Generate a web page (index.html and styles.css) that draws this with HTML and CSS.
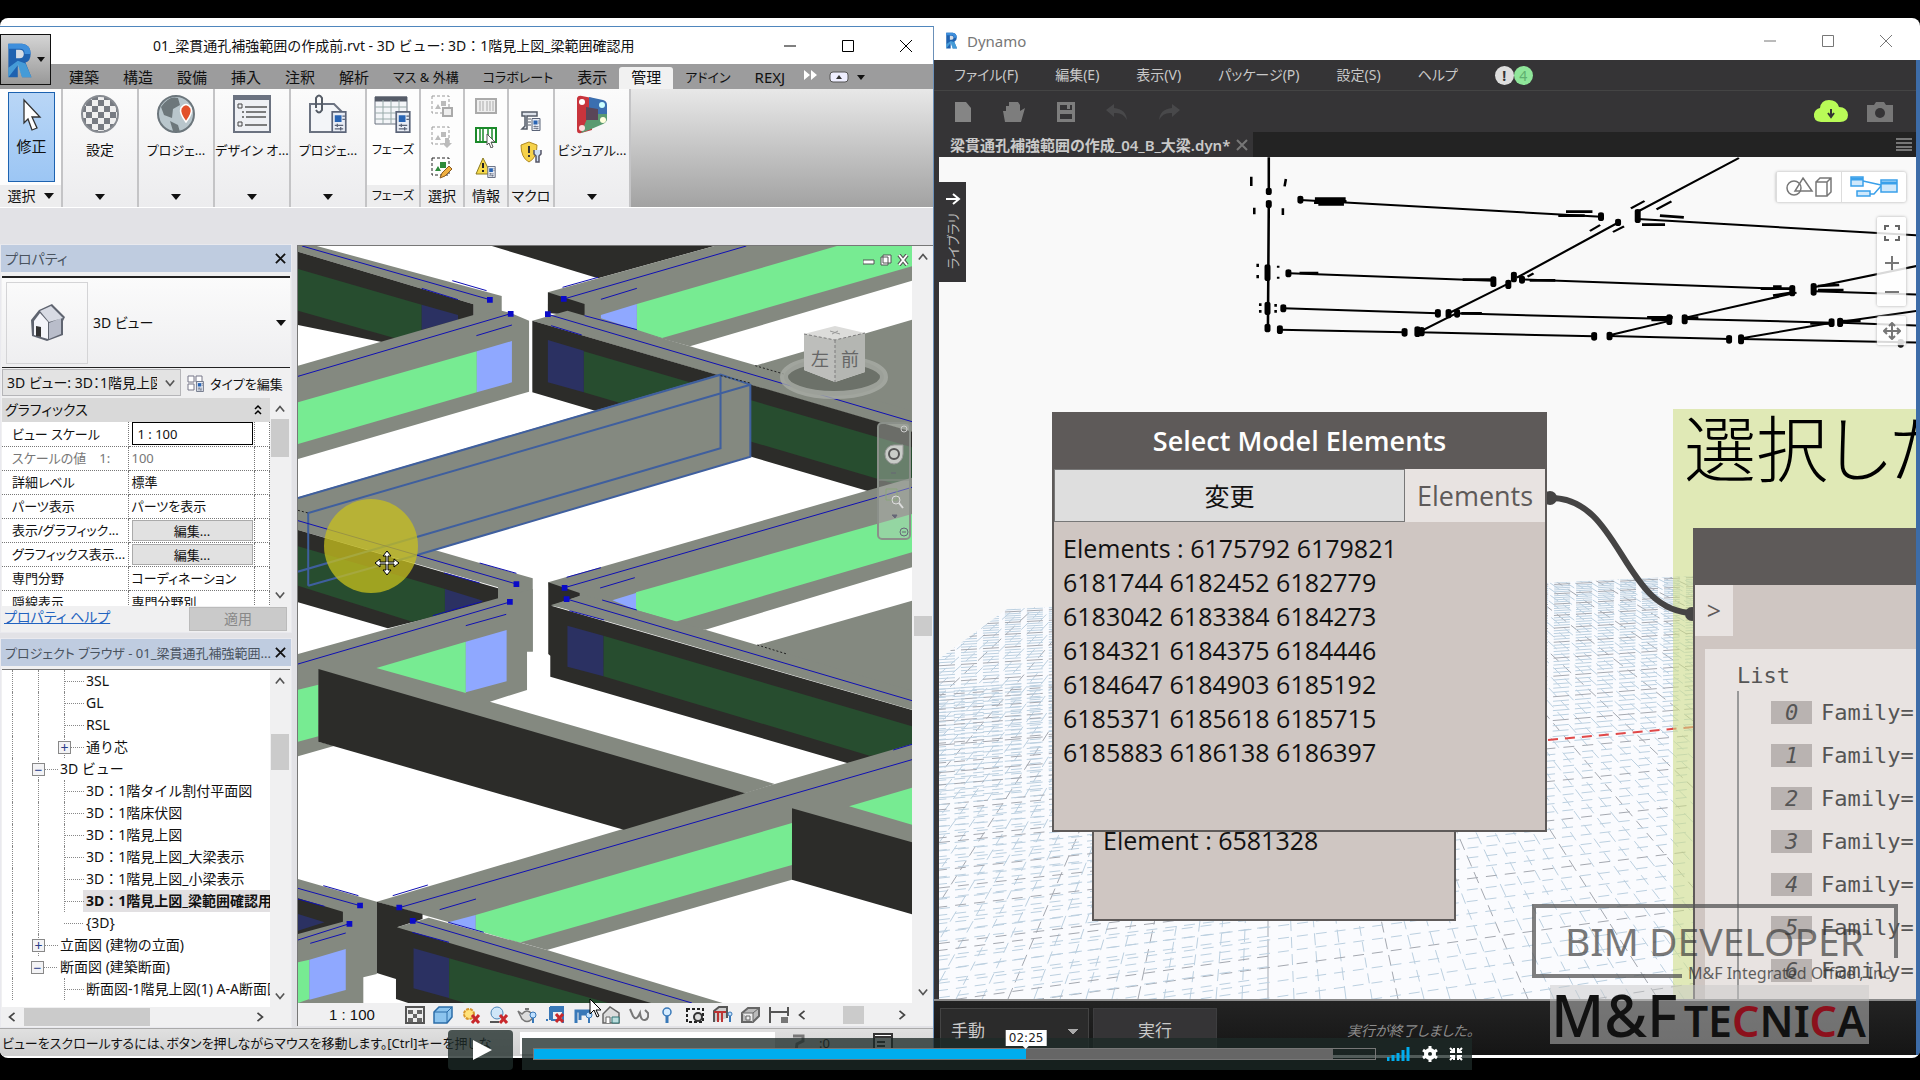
FILE: index.html
```
<!DOCTYPE html>
<html lang="ja">
<head>
  <meta charset="UTF-8">
  <title>梁貫通孔補強範囲の作成</title>
  <meta name="viewport" content="width=device-width, initial-scale=1">
  <link rel="stylesheet" href="styles.css">
</head>
<body>
  <svg class="defs" width="0" height="0">
    <symbol id="up" viewBox="0 0 12 12"><path d="M1 9l5-6 5 6" fill="none" stroke="#555" stroke-width="2"/></symbol>
    <symbol id="down" viewBox="0 0 12 12"><path d="M1 3l5 6 5-6" fill="none" stroke="#555" stroke-width="2"/></symbol>
    <symbol id="left" viewBox="0 0 12 12"><path d="M9 1L3 6l6 5" fill="none" stroke="#444" stroke-width="2"/></symbol>
    <symbol id="right" viewBox="0 0 12 12"><path d="M3 1l6 5-6 5" fill="none" stroke="#444" stroke-width="2"/></symbol>
    <symbol id="caret" viewBox="0 0 10 6"><path d="M0 0h10L5 6z" fill="currentColor"/></symbol>
    <symbol id="cross" viewBox="0 0 12 12"><path d="M1 1l10 10M11 1L1 11" fill="none" stroke="currentColor" stroke-width="2"/></symbol>
    <symbol id="doc" viewBox="0 0 18 26"><path d="M1 1h16v24H1z" fill="#e9edf5" stroke="#5b6478" stroke-width="2"/><path d="M4 5h8v8H4z" fill="#2864b4"/><path d="M13 6h3M13 10h3M4 17h10M4 21h10M7 15v4M11 19v4" stroke="#5b6478" stroke-width="1.5"/></symbol>
    <symbol id="rlogo" viewBox="0 0 30 42"><path d="M2 2h16q10 1 10 12 0 8-6 10l7 17H18L13 25V41H2z" fill="#1f62b0"/><path d="M2 2h16q10 1 10 12h-7q0-6-5-6H2z" fill="#3f8fdc"/><path d="M11 9h4q5 0 5 5t-5 5h-4z" fill="#d6dce4"/><path d="M2 30l11-8 9 3 7 16H18L13 27 2 41z" fill="#56b4e8" opacity=".7"/></symbol>
  </svg>

  <main class="desktop">
    <!-- Revit -->
    <section class="revit">
      <header class="title">
        <button class="app-btn" aria-label="アプリケーション メニュー"><svg width="27" height="36"><use href="#rlogo"/></svg><svg width="8" height="5"><use href="#caret"/></svg></button>
        <h1>01_梁貫通孔補強範囲の作成前.rvt - 3D ビュー: 3D：1階見上図_梁範囲確認用</h1>
        <div class="win-btns">
          <button aria-label="最小化"><svg width="14" height="14"><path d="M1 7h12" stroke="#000"/></svg></button>
          <button aria-label="最大化"><svg width="14" height="14"><path d="M1.500 1.500h11v11h-11z" fill="none" stroke="#000"/></svg></button>
          <button aria-label="閉じる"><svg width="14" height="14"><path d="M1 1l12 12M13 1L1 13" stroke="#000"/></svg></button>
        </div>
      </header>
      <nav class="tabs">
        <a href="#">建築</a><a href="#">構造</a><a href="#">設備</a><a href="#">挿入</a><a href="#">注釈</a><a href="#">解析</a><a href="#" class="kana">マス &amp; 外構</a><a href="#" class="kana">コラボレート</a><a href="#">表示</a><a href="#" class="active">管理</a><a href="#" class="kana">アドイン</a><a href="#">REXJ</a>
        <svg class="more" width="14" height="10"><path d="M1 0l6 5-6 5zM8 0l6 5-6 5z" fill="#fff"/></svg>
        <svg class="fold" width="20" height="12"><rect x="1" y="1" width="18" height="10" rx="3" fill="#eef" stroke="#555"/><path d="M7 8l3-4 3 4z" fill="#333"/></svg>
        <svg width="8" height="5"><use href="#caret"/></svg>
      </nav>
      <div class="ribbon">
        <div class="panel first">
          <button class="modify"><svg width="20" height="34" viewBox="0 0 20 34"><path d="M2 2l16 17h-8l5 11-5 2-4-11-4 4z" fill="#fff" stroke="#333" stroke-width="1.300"/></svg>修正</button>
          <footer>選択 <svg width="10" height="6"><use href="#caret"/></svg></footer>
        </div>
        <button class="drop"><svg width="40" height="40" viewBox="0 0 40 40"><defs><pattern id="chk" width="12" height="12" patternUnits="userSpaceOnUse"><path d="M0 0h6v6H0zM6 6h6v6H6z" fill="#777b82"/></pattern></defs><circle cx="20" cy="20" r="18" fill="#f0f0f0"/><circle cx="20" cy="20" r="18" fill="url(#chk)" stroke="#888c92" stroke-width="2"/></svg><span>設定</span><svg class="car" width="10" height="6"><use href="#caret"/></svg></button>
        <button class="drop"><svg width="40" height="40" viewBox="0 0 40 40"><circle cx="20" cy="20" r="18" fill="#b9c6cc" stroke="#6c767c" stroke-width="2"/><path d="M5 13q8-12 17-9l2 7-7 4-1 9-8-3zM14 27l8 4 2 7-7-1z" fill="#6d777b"/><path d="M30 28q-7-9-5-14 5-7 10 0 2 5-5 14z" fill="#e2502a" stroke="#fff" stroke-width="1.500"/></svg><span>プロジェ...</span><svg class="car" width="10" height="6"><use href="#caret"/></svg></button>
        <button class="drop"><svg width="40" height="40" viewBox="0 0 40 40"><path d="M2 2h36v36H2z" fill="#eef0f4" stroke="#6b7280" stroke-width="2"/><path d="M3 4h34" stroke="#6b7280" stroke-width="4"/><path d="M6 10h4v4H6zM6 28h4v4H6z" fill="none" stroke="#444"/><path d="M13 13h22M14 18h20M14 23h20M13 31h22M10 18h2M10 23h2" stroke="#555" stroke-width="1.500"/></svg><span>デザイン オ...</span><svg class="car" width="10" height="6"><use href="#caret"/></svg></button>
        <button class="drop"><svg width="40" height="40" viewBox="0 0 40 40"><path d="M2 10h24l8 8v20H2z" fill="#f3f5f8" stroke="#6b7280" stroke-width="2"/><path d="M8 14V4q3-5 6 0v12q-3 5-6 0" fill="none" stroke="#555c66" stroke-width="2"/><use href="#doc" x="23" y="17" width="16" height="22"/></svg><span>プロジェ...</span><svg class="car" width="10" height="6"><use href="#caret"/></svg></button>
        <div class="panel w52">
          <button class="big"><svg width="40" height="40" viewBox="0 0 40 40"><path d="M2 3h32v27H2z" fill="#f3f5f8" stroke="#6b7280"/><path d="M2 5h32" stroke="#565c68" stroke-width="5"/><path d="M2 13h32M2 19h32M2 25h32M10 6v24M18 6v24M26 6v24" stroke="#9aa"/><use href="#doc" x="22" y="17" width="16" height="22"/></svg><span>フェーズ</span></button>
          <footer>フェーズ</footer>
        </div>
        <div class="panel">
          <div class="icons">
            <svg width="22" height="22" viewBox="0 0 22 22"><path d="M1 1h17v17H1z" fill="none" stroke="#999" stroke-dasharray="3 2"/><path d="M4 14l3-5 3 5zM10 6h5v5h-5z" fill="#bbb"/><path d="M12 13h9v8h-9z" fill="#eee" stroke="#aaa" stroke-width="2"/></svg>
            <svg width="22" height="22" viewBox="0 0 22 22"><path d="M1 1h17v17H1z" fill="none" stroke="#999" stroke-dasharray="3 2"/><path d="M4 14l3-5 3 5zM10 6h5v5h-5z" fill="#bbb"/><path d="M14 12h4v5h3l-5 5-5-5h3z" fill="#bbb"/></svg>
            <svg width="22" height="22" viewBox="0 0 22 22"><path d="M1 1h17v17H1z" fill="none" stroke="#222" stroke-dasharray="3 2"/><path d="M4 14l3-5 3 5zM9 5h6v6H9z" fill="#2d8a3a"/><path d="M9 21l2-5 7-7 3 3-7 7z" fill="#f0b040" stroke="#8a5a20"/></svg>
          </div>
          <footer>選択</footer>
        </div>
        <div class="panel">
          <div class="icons">
            <svg width="22" height="22" viewBox="0 0 22 22"><path d="M1 4h20v14H1z" fill="#eee" stroke="#aaa" stroke-width="2"/><path d="M5 6v10M8 6v10M12 6v10M15 6v10M18 6v10" stroke="#aaa"/></svg>
            <svg width="22" height="22" viewBox="0 0 22 22"><path d="M1 2h20v14H1z" fill="#fff" stroke="#1b8a2a" stroke-width="2"/><path d="M5 3v12M8 3v12M13 3v12M17 3v12" stroke="#1b8a2a" stroke-width="1.500"/><path d="M12 8l8 8h-4l2 5-2 1-2-5-2 2z" fill="#fff" stroke="#555"/></svg>
            <svg width="22" height="22" viewBox="0 0 22 22"><path d="M8 1l8 16H1z" fill="#f6d94a" stroke="#8a7a20"/><path d="M8 6v5M8 13v2" stroke="#222" stroke-width="2"/><use href="#doc" x="12" y="9" width="9" height="12"/></svg>
          </div>
          <footer>情報</footer>
        </div>
        <div class="panel w46">
          <div class="icons two">
            <svg width="22" height="22" viewBox="0 0 22 22"><path d="M2 2h15v4H7v13H2l3-3V6H2z" fill="#dde2ea" stroke="#555c68" stroke-width="1.500"/><path d="M8 9h3M8 12h3M8 15h3" stroke="#555c68"/><use href="#doc" x="11" y="8" width="10" height="13"/></svg>
            <svg width="22" height="22" viewBox="0 0 22 22"><path d="M9 1l8 3q0 13-8 17Q1 17 1 4z" fill="#f6d24a" stroke="#b08a20"/><path d="M9 5v7M9 14v2" stroke="#333" stroke-width="2"/><path d="M14 9v4l2 2v6h3v-6l2-2V9" fill="#cfe0f5" stroke="#556" stroke-width="1.500"/></svg>
          </div>
          <footer>マクロ</footer>
        </div>
        <button class="drop"><svg width="40" height="40" viewBox="0 0 40 40"><path d="M5 4q1-3 5-2l10 2v32L9 39q-4 1-4-3z" fill="#c8343c"/><path d="M17 3l14 3q4 1 4 5v11H17z" fill="#3b6fb0"/><path d="M17 20h18v5q0 3-4 5l-14 6-8 3z" fill="#5a9a70"/><path d="M14 13l12 2v11H14z" fill="#5a4658"/><circle cx="10" cy="8" r="3" fill="#fff"/><circle cx="30" cy="11" r="3" fill="#cff"/><circle cx="10" cy="34" r="3" fill="#fdd"/><circle cx="31" cy="26" r="3" fill="#ffd"/></svg><span>ビジュアル...</span><svg class="car" width="10" height="6"><use href="#caret"/></svg></button>
      </div>
      <div class="options"></div>

      <div class="work">
        <aside class="docks">
          <section class="dock props">
            <h2>プロパティ <button aria-label="閉じる"><svg width="11" height="11"><use href="#cross"/></svg></button></h2>
            <div class="dock-body">
              <div class="type">
                <div class="thumb"><svg width="40" height="40" viewBox="0 0 40 40"><path d="M4 17l8-10L25 1l13 13-2 4v14L20 38 5 33z" fill="#5f6470"/><path d="M7 18l6-8 8 9v17L7 32z" fill="#f4f5fa"/><path d="M22 20l12-5v16l-12 5z" fill="#b9bdca"/><path d="M13 8l11-5 12 12-14 4z" fill="#d8dbe4"/><path d="M9 23l5 1v10l-5-1z" fill="#333"/></svg></div>
                <span>3D ビュー</span><svg width="10" height="6"><use href="#caret"/></svg>
              </div>
              <div class="instance">
                <div class="pick"><select aria-label="ビュー"><option>3D ビュー: 3D：1階見上図</option></select><svg width="10" height="10"><use href="#down"/></svg></div>
                <button><svg width="18" height="18" viewBox="0 0 18 18"><path d="M1 1h6v6H1zM9 1h6v6H9zM1 9h6v6H1z" fill="#fff" stroke="#778"/><use href="#doc" x="9" y="6" width="8" height="11"/></svg>タイプを編集</button>
              </div>
              <div class="scroller">
                <table>
                  <colgroup><col class="c1"><col class="c2"><col></colgroup>
                  <thead><tr><th colspan="3">グラフィックス<svg width="8" height="11" viewBox="0 0 8 11"><path d="M1 5l3-3 3 3M1 10l3-3 3 3" fill="none" stroke="#000" stroke-width="1.500"/></svg></th></tr></thead>
                  <tbody>
                    <tr><td><label for="scale">ビュー スケール</label></td><td><input id="scale" value="1 : 100"></td><td></td></tr>
                    <tr class="off"><td>スケールの値　1:</td><td>100</td><td></td></tr>
                    <tr><td>詳細レベル</td><td>標準</td><td></td></tr>
                    <tr><td>パーツ表示</td><td>パーツを表示</td><td></td></tr>
                    <tr><td>表示/グラフィック...</td><td><button>編集...</button></td><td></td></tr>
                    <tr><td>グラフィックス表示...</td><td><button>編集...</button></td><td></td></tr>
                    <tr><td>専門分野</td><td>コーディネーション</td><td></td></tr>
                    <tr><td>隠線表示</td><td>専門分野別</td><td></td></tr>
                  </tbody>
                </table>
                <div class="vbar"><svg width="10" height="10"><use href="#up"/></svg><i class="t1"></i><svg width="10" height="10"><use href="#down"/></svg></div>
              </div>
              <div class="apply"><a href="#">プロパティ ヘルプ</a><button disabled>適用</button></div>
            </div>
          </section>
          <section class="dock browser">
            <h2>プロジェクト ブラウザ - 01_梁貫通孔補強範囲... <button aria-label="閉じる"><svg width="11" height="11"><use href="#cross"/></svg></button></h2>
            <div class="scroller">
              <ul class="tree">
                <li><i></i><i></i><i class="tee"></i>3SL</li>
                <li><i></i><i></i><i class="tee"></i>GL</li>
                <li><i></i><i></i><i class="tee"></i>RSL</li>
                <li><i></i><i></i><i class="tee"><b>+</b></i>通り芯</li>
                <li><i></i><i class="tee"><b>−</b></i>3D ビュー</li>
                <li><i></i><i></i><i class="tee"></i>3D：1階タイル割付平面図</li>
                <li><i></i><i></i><i class="tee"></i>3D：1階床伏図</li>
                <li><i></i><i></i><i class="tee"></i>3D：1階見上図</li>
                <li><i></i><i></i><i class="tee"></i>3D：1階見上図_大梁表示</li>
                <li><i></i><i></i><i class="tee"></i>3D：1階見上図_小梁表示</li>
                <li><i></i><i></i><i class="tee"></i><strong>3D：1階見上図_梁範囲確認用</strong></li>
                <li><i></i><i></i><i class="tee end"></i>{3D}</li>
                <li><i></i><i class="tee"><b>+</b></i>立面図 (建物の立面)</li>
                <li><i></i><i class="tee end"><b>−</b></i>断面図 (建築断面)</li>
                <li><i></i><i class="none"></i><i class="tee"></i>断面図-1階見上図(1) A-A断面図</li>
              </ul>
              <div class="vbar"><svg width="10" height="10"><use href="#up"/></svg><i class="t2"></i><svg width="10" height="10"><use href="#down"/></svg></div>
            </div>
            <div class="hbar"><svg width="10" height="10"><use href="#left"/></svg><i></i><svg width="10" height="10"><use href="#right"/></svg></div>
          </section>
        </aside>

        <section class="view">
          <div class="view-main">
            <div class="model">
              <svg class="beams" viewBox="20 21 1504 2271" preserveAspectRatio="none">
                <!-- far beams -->
                <path class="d" d="M495 21H1040L755 118z"/>
                <path class="g" d="M632 160L1040 21H1524V125L980 322 720 235z"/>
                <path class="lg" d="M850 195L1340 21H1524V82L912 297 850 272z"/>
                <path class="lb" d="M762 228L850 195V272L762 238z"/>
                <path class="d" d="M632 160L722 195V232L632 222z"/>
                <path class="g" d="M1140 380L1524 242V560z"/>
                <!-- upper left -->
                <path class="g" d="M20 21H66L519 171V222L450 240V196L20 38z"/>
                <path class="d" d="M20 38L450 196V232L270 320 20 258z"/>
                <path class="dg" d="M20 90L323 197V300L280 305 20 215z"/>
                <path class="db" d="M323 197L412 228V242L323 272z"/>
                <path class="g" d="M20 380L450 228 519 215 541 222 586 245V458L20 660z"/>
                <path class="lg" d="M20 490L458 337V460L20 615z"/>
                <path class="lb" d="M458 337L544 306V430L458 460z"/>
                <!-- upper right, falling -->
                <path class="g" d="M594 245L680 215 1524 515V580z"/>
                <path class="d" d="M594 245L1524 578V795L594 460z"/>
                <path class="dg" d="M720 337L1524 625V750L720 460z"/>
                <path class="db" d="M632 303L720 335V460L632 430z"/>
                <!-- lower left -->
                <path class="g" d="M20 812L355 933 595 1018V1238L510 1100V1045L20 873z"/>
                <path class="d" d="M20 873L510 1048V1085L240 1168 20 1090z"/>
                <path class="dg" d="M20 922L380 1050V1125L300 1148 20 1040z"/>
                <path class="db" d="M380 1050L475 1086 380 1120z"/>
                <path class="g" d="M20 1245L510 1078 595 1050V1238H581V1353L490 1388 1188 1635 1115 1663 70 1508 110 1520 20 1552z"/>
                <path class="lg" d="M20 1352L70 1337V1492L20 1508z"/>
                <path class="lg" d="M212 1287L431 1208V1362z"/>
                <path class="lb" d="M431 1208L531 1173V1327L431 1360z"/>
                <!-- centre right -->
                <path class="g" d="M633 1030L1524 716V985L1018 1172 640 1100z"/>
                <path class="lg" d="M848 1060L1524 825V940L945 1148 848 1113z"/>
                <path class="lb" d="M790 1084L848 1062V1113z"/>
                <path class="g" d="M1145 1218L1524 1085V1380z"/>
                <path class="d" d="M633 1030L710 1062V1070L640 1100 1524 1413V1566L1365 1572 638 1313V1250L633 1245z"/>
                <path class="g" d="M640 1098L720 1068 1018 1172 1524 1355V1412z"/>
                <path class="dg" d="M768 1190L1524 1462V1530L1420 1550 768 1312z"/>
                <path class="db" d="M680 1160L768 1190V1312L680 1283z"/>
                <!-- long lower beam -->
                <path class="g" d="M213 1988L1188 1635 1524 1515V1812L1230 1922 630 2133z"/>
                <path class="d" d="M70 1290L1115 1663 818 1772 70 1508z"/>
                <path class="lg" d="M455 2028L1230 1752V1878L562 2111 455 2072z"/>
                <path class="lb" d="M388 2050L455 2028V2072z"/>
                <path class="lg" d="M1370 1702L1524 1646V1757z"/>
                <path class="d" d="M1230 1708L1524 1810V2026L1230 1922z"/>
                <!-- bottom left column -->
                <path class="g" d="M20 1920L213 1988V2205L180 2215V2292H20z"/>
                <path class="d" d="M20 1978L130 2018V2048L20 2085z"/>
                <path class="db" d="M20 2025L85 2050 20 2075z"/>
                <path class="lg" d="M20 2170L48 2162V2280L20 2292z"/>
                <path class="lb" d="M48 2162L137 2130V2253L48 2282z"/>
                <path class="d" d="M213 1988L325 2025V2040L265 2064 900 2292H290L260 2280V2220L213 2202z"/>
                <path class="g" d="M262 2065L340 2036 630 2133 1060 2292H885z"/>
                <path class="dg" d="M390 2158L780 2292H430L390 2278z"/>
                <path class="db" d="M303 2128L390 2158V2277L303 2248z"/>
                <!-- selected beam -->
                <path class="g" d="M20 775L1055 405 1128 435V652L330 943 20 832z"/>
                <path class="sel" d="M20 777L1055 407 1128 437V653L320 945M45 1040V822L1128 437M1055 407V628L20 998M45 1040L320 945"/>
                <!-- analytical lines -->
                <path class="ln" d="M30 21L490 182M323 148L412 182M398 125L482 155M20 412L541 224M457 290L544 258M671 180L1118 21M762 181L850 148M668 145L755 115M632 226L1524 548M640 260L715 288M722 230L850 272M20 845L555 1035M378 1002L465 1032M465 972L555 1003M20 1275L539 1089M431 1160L530 1126M350 1130L470 1088M673 1046L1524 745M760 1047L845 1016M678 1015L762 986M765 1083L850 1113M678 1080L1524 1385M685 1115L770 1143M268 2006L1524 1562M367 2012L456 1980M252 1970L338 1938M388 2050L475 2080M1478 1533L1524 1516M301 2045L985 2292M300 2080L390 2110M20 1948L172 2000M82 1940L168 1970M20 1980L85 2002M20 2103L146 2054M50 2113L137 2082"/>
                <path class="dot" d="M1055 410L1128 432M1140 380L1210 405M1145 1218L1220 1246M20 814L45 822"/>
                <path class="pt" d="M483 174h14v17h-14zM534 216h14v17h-14zM664 171h14v17h-14zM625 217h14v17h-14zM548 1027h14v17h-14zM532 1080h14v17h-14zM666 1038h14v17h-14zM671 1072h14v17h-14zM261 1997h14v17h-14zM294 2037h14v17h-14zM165 1991h14v17h-14zM139 2046h14v17h-14z"/>
              </svg>
              <div class="mdi">
                <svg width="46" height="12" viewBox="0 0 46 12"><path d="M0 6h11v4H0z" fill="#fff" stroke="#555"/><path d="M20 1h8v8h-8zM18 3h7v8h-7z" fill="#fff" stroke="#555"/><path d="M36 1l8 10M44 1l-8 10" stroke="#555" stroke-width="4"/><path d="M36 1l8 10M44 1l-8 10" stroke="#fff" stroke-width="2"/></svg>
              </div>
              <svg class="cube" width="116" height="76" viewBox="0 0 116 76">
                <ellipse cx="57" cy="51" rx="50" ry="19" fill="#6c7169"/><ellipse cx="57" cy="51" rx="50" ry="18" fill="none" stroke="#a9aca5" stroke-width="8" opacity=".8"/>
                <path d="M27 8L58 0l30 7v39L58 56 27 44z" fill="#dcdcda"/><path d="M27 8l31 6v42L27 44z" fill="#bdbebb"/><path d="M58 14l30-7v39L58 56z" fill="#b4b6b2"/><path d="M27 8l31 6 30-7M58 14v42" fill="none" stroke="#7c7c7c" stroke-dasharray="3 2"/><path d="M53 5l10 3M55 8l6-3" stroke="#999"/>
                <text x="34" y="40">左</text><text x="64" y="40">前</text>
              </svg>
              <svg class="navbar" width="34" height="118" viewBox="0 0 34 118">
                <rect x="1" y="1" width="32" height="116" rx="4" fill="#b7bcb6" fill-opacity=".45" stroke="#8b908a" stroke-width="2"/><path d="M1 58h32" stroke="#8b908a"/>
                <circle cx="27" cy="7" r="3" fill="none" stroke="#ccc"/><path d="M8 32a9 9 0 0 1 9-9h9v9a9 10 0 0 1-18 0z" fill="#c9ccc8" stroke="#999"/><circle cx="17" cy="32" r="5" fill="none" stroke="#555" stroke-width="2"/>
                <path d="M14 51h5M15 93h5l-2 3z" stroke="#667" fill="#667"/><path d="M9 67h11v11H9z" fill="none" stroke="#8aa57a"/><circle cx="19" cy="78" r="4" fill="none" stroke="#ddd"/><path d="M22 81l4 5" stroke="#ddd" stroke-width="2"/><circle cx="27" cy="110" r="4" fill="none" stroke="#667"/><path d="M25 110h4" stroke="#667"/>
              </svg>
              <div class="spot"></div>
              <svg class="pan" width="26" height="26" viewBox="0 0 26 26"><path d="M13 1l4 5h-3v6h6V9l5 4-5 4v-3h-6v6h3l-4 5-4-5h3v-6H6v3l-5-4 5-4v3h6V6H9z" fill="#fff" stroke="#000"/></svg>
            </div>
            <div class="vbar"><svg width="10" height="10"><use href="#up"/></svg><i class="t3"></i><svg width="10" height="10"><use href="#down"/></svg></div>
          </div>
          <div class="viewbar">
            <span>1 : 100</span>
            <svg width="20" height="18" viewBox="0 0 20 18"><path d="M1 1h18v16H1z" fill="#eee" stroke="#555" stroke-width="2"/><path d="M3 4h5v4H3zM12 4h5v4h-5zM8 8h4v4H8zM3 12h5v4H3zM12 12h5v4h-5z" fill="#666"/></svg>
            <svg width="20" height="18" viewBox="0 0 20 18"><path d="M1 6l5-5h13v10l-5 6H1z" fill="#8cc4ee" stroke="#2b6ca8" stroke-width="1.500"/><path d="M1 6h13v11M14 6l5-5" fill="none" stroke="#2b6ca8"/></svg>
            <svg width="20" height="18" viewBox="0 0 20 18"><circle cx="8" cy="8" r="5" fill="#ffe27a" stroke="#d8962a" stroke-width="2" stroke-dasharray="3 1"/><path d="M11 9l7 8M18 9l-7 8" stroke="#c8282c" stroke-width="3"/></svg>
            <svg width="20" height="18" viewBox="0 0 20 18"><circle cx="8" cy="7" r="6" fill="#cfe6f8" stroke="#4b86b8"/><path d="M1 16h9" stroke="#555" stroke-width="2"/><path d="M11 9l7 8M18 9l-7 8" stroke="#c8282c" stroke-width="3"/></svg>
            <svg width="20" height="18" viewBox="0 0 20 18"><path d="M1 5l4 3q5-6 10 0v5q-5 5-10 0z" fill="#ddd" stroke="#777" stroke-width="1.500"/><path d="M8 3h4" stroke="#777" stroke-width="2"/><circle cx="16" cy="9" r="3" fill="#bfe0ff" stroke="#3878b8"/><path d="M16 12v5" stroke="#3878b8" stroke-width="2"/></svg>
            <svg width="20" height="18" viewBox="0 0 20 18"><path d="M5 1v13M3 14H1M5 5h13v12M5 1h13v2H7v11h8" fill="none" stroke="#3878b8" stroke-width="2"/><path d="M11 8l7 8M18 8l-7 8" stroke="#c8282c" stroke-width="3"/></svg>
            <svg width="20" height="18" viewBox="0 0 20 18"><path d="M3 17V5h13v3M7 14V8h8" fill="none" stroke="#3878b8" stroke-width="3"/><circle cx="16" cy="9" r="3" fill="#bfe0ff" stroke="#3878b8"/><path d="M16 12v5" stroke="#3878b8" stroke-width="2"/></svg>
            <svg width="20" height="18" viewBox="0 0 20 18"><path d="M2 8l7-7 9 6v10H2z" fill="#ddd" stroke="#666" stroke-width="1.500"/><path d="M5 17v-6h4v6" fill="#fff" stroke="#666"/><path d="M11 11h7v6h-7z" fill="#bdd" stroke="#377"/></svg>
            <svg width="20" height="18" viewBox="0 0 20 18"><path d="M1 3l3 7q3 5 6-1l1-2q1 8 5 7t3-7l-3-3" fill="none" stroke="#777" stroke-width="2"/></svg>
            <svg width="20" height="18" viewBox="0 0 20 18"><circle cx="10" cy="6" r="4" fill="#d5ecff" stroke="#3878b8" stroke-width="1.500"/><path d="M10 10v7" stroke="#3878b8" stroke-width="3"/></svg>
            <svg width="20" height="18" viewBox="0 0 20 18"><path d="M2 3h16v13H2z" fill="none" stroke="#222" stroke-width="2" stroke-dasharray="3 2"/><circle cx="13" cy="11" r="4" fill="#ddd" stroke="#333" stroke-width="2"/></svg>
            <svg width="20" height="18" viewBox="0 0 20 18"><path d="M1 16V5l5-4h8v11" fill="#ccc" stroke="#555" stroke-width="2"/><path d="M1 6h12M5 5v11M9 5v11" stroke="#b33" stroke-width="2"/><circle cx="17" cy="8" r="2" fill="#bfe0ff" stroke="#3878b8"/><path d="M17 10v6" stroke="#3878b8" stroke-width="2"/></svg>
            <svg width="20" height="18" viewBox="0 0 20 18"><path d="M1 7l6-5h11v8l-6 6H1z" fill="#bbb" stroke="#666" stroke-width="2"/><path d="M1 7h11v9M12 7l6-5M5 10h4v4H5z" fill="#eee" stroke="#666"/></svg>
            <svg width="20" height="18" viewBox="0 0 20 18"><path d="M1 1v16M19 1v9M2 6h16" stroke="#555" stroke-width="2"/><path d="M12 11h7v6h-7z" fill="#777"/></svg>
            <div class="hbar"><svg width="10" height="10"><use href="#left"/></svg><i></i><svg width="10" height="10"><use href="#right"/></svg></div>
          </div>
        </section>
      </div>
      <footer class="status">
        <span>ビューをスクロールするには、ボタンを押しながらマウスを移動します。[Ctrl]キーを押しな</span>
        <select aria-label="ワークセット"><option></option></select>
        <svg width="16" height="18" viewBox="0 0 16 18"><path d="M4 2h10v5L8 10l-1 7" fill="none" stroke="#777" stroke-width="3"/></svg><span>:0</span>
        <svg class="opt" width="20" height="20" viewBox="0 0 20 20"><path d="M1 1h18v17H1z" fill="#fff" stroke="#333" stroke-width="2"/><path d="M1 4h18M4 9h8M4 13h8" stroke="#333" stroke-width="2"/></svg>
      </footer>
    </section>

    <!-- Dynamo -->
    <section class="dynamo">
      <header class="dyn-title">
        <svg width="15" height="17"><use href="#rlogo"/></svg><h1>Dynamo</h1>
        <div class="win-btns">
          <button aria-label="最小化"><svg width="14" height="14"><path d="M1 7h12" stroke="#777"/></svg></button>
          <button aria-label="最大化"><svg width="14" height="14"><path d="M1.500 1.500h11v11h-11z" fill="none" stroke="#777"/></svg></button>
          <button aria-label="閉じる"><svg width="14" height="14"><path d="M1 1l12 12M13 1L1 13" stroke="#777"/></svg></button>
        </div>
      </header>
      <div class="dyn-body">
        <nav class="menu">
          <a href="#">ファイル(F)</a><a href="#">編集(E)</a><a href="#">表示(V)</a><a href="#">パッケージ(P)</a><a href="#">設定(S)</a><a href="#">ヘルプ</a>
          <span class="alert">!</span><span class="count">4</span>
        </nav>
        <div class="tools">
          <svg width="18" height="20"><path d="M1 0h11l5 6v14H1z" fill="#858585"/></svg>
          <svg width="24" height="20"><path d="M7 0h9l2 3v6H4V4h3zM1 9h17l5-3-4 14H3z" fill="#7d7d7d"/></svg>
          <svg width="20" height="20"><path d="M1 0h18v20H1z" fill="#7d7d7d"/><path d="M4 3h12v5H4zM4 12h12v5H4z" fill="#353436"/><path d="M11 3h3v4h-3z" fill="#7d7d7d"/></svg>
          <svg width="22" height="16"><path d="M0 6l8-6v4q12 1 13 12-4-8-13-7v4z" fill="#48484a"/></svg>
          <svg width="22" height="16"><path d="M22 6l-8-6v4Q2 5 1 16q4-8 13-7v4z" fill="#48484a"/></svg>
          <svg class="cloud" width="36" height="23"><path d="M8 22q-8-1-7-8 1-5 6-6 1-8 9-8 8 0 10 7 8 0 9 8 0 7-8 7z" fill="#b9fb57"/><path d="M18 9v8M15 13l3 4 3-4" fill="none" stroke="#333" stroke-width="2"/></svg>
          <svg width="28" height="20"><path d="M1 3h7l2-3h8l2 3h7v17H1z" fill="#777"/><circle cx="14" cy="11" r="5" fill="#353436"/></svg>
        </div>
        <div class="files"><div class="file">梁貫通孔補強範囲の作成_04_B_大梁.dyn* <button aria-label="閉じる"><svg width="12" height="12"><use href="#cross"/></svg></button></div><svg width="16" height="13"><path d="M0 1h16M0 5h16M0 9h16M0 12h16" stroke="#777" stroke-width="2"/></svg></div>

        <div class="canvas">
          <svg class="scene" viewBox="939 157 977 842" preserveAspectRatio="xMinYMin slice">
            <defs><clipPath id="floor"><path d="M1007 609L1692 576 1916 566V999H939V659z"/></clipPath></defs>
            <path d="M1007 609L1692 576 1916 566V999H939V659z" fill="#fafbfe"/>
            <g id="grid" clip-path="url(#floor)"></g>
            <path d="M1548 740L1694 727" stroke="#e04848" stroke-width="2" stroke-dasharray="10 7"/>
            <g transform="translate(1250 150) scale(.427 .3333)" fill="none" stroke="#000" stroke-width="6">
              <path d="M44 22V122M44 162L42 535M118 150L822 200M908 185L1145 24M908 207L1565 256M862 218L625 383M603 402L465 490M398 545L480 492M92 370L570 392M635 388L1275 418M1320 424L1565 434M1320 412L1565 347M1280 428L1020 503M985 512L842 556M78 475L440 490M480 490L985 507M1020 507L1365 518M1385 515L1565 482M1385 518L1565 527M70 539L362 547M398 547L806 559M842 558L1122 567M1152 567L1565 578M1355 520L1152 565"/>
              <path d="M44 120v8M44 157v10M41 350v36M41 462v26M41 528v12M118 144v10M822 194v12M908 184v28M862 213v8M90 365v10M570 386v18M605 396v14M618 372v18M637 384v10M78 470v10M440 484v12M465 484v14M485 484v12M70 533v12M362 541v12M392 536v18M402 538v14M806 553v12M842 552v12M982 500v18M1018 500v16M1122 562v12M1150 560v16M1270 412v20M1320 406v24M1362 512v12M1382 510v14M1524 574v12" stroke-width="14" stroke-linecap="round"/>
              <path d="M152 146h72M152 154h74M160 163h60M740 185h62M722 197h62M116 369h44M498 389h72M655 391h60M1196 416h80M1225 410h20M1225 437l50-10M1330 408l50-3M1330 420h60M495 490h48M930 502h60M940 510h40M1020 503h30M1312 520h50M1385 513h45M150 158h70M960 197l56 5M918 224h54" stroke-width="8"/>
              <path d="M3 80v28M84 87l-3 22M10 173v20M77 175v20M18 341v10M66 347v6M18 375v10M66 380v6M24 460v8M60 462v8M24 480v8M60 480v8M892 175l32-22M952 178l35-24M796 243l24-18M850 246l26-17M650 380l14-10"/>
            </g>
            <rect x="1673" y="409" width="243" height="590" fill="#cfdd88" fill-opacity=".6"/>
            <path d="M1551 498C1622 498 1622 613 1694 613" fill="none" stroke="#454444" stroke-width="6"/>
            <circle cx="1550" cy="498" r="7" fill="#454444"/><circle cx="1692" cy="614" r="7" fill="#454444"/>
          </svg>
          <button class="library"><svg width="16" height="12" viewBox="0 0 16 12"><path d="M1 6h12M8 1l6 5-6 5" fill="none" stroke="#fff" stroke-width="2"/></svg><span>ライブラリ</span></button>
          <div class="group-name">選択した</div>

          <article class="node single"><p>Element : 6581328</p></article>
          <article class="node multi">
            <h3>Select Model Elements</h3>
            <div class="ports"><button>変更</button><span>Elements</span></div>
            <p>Elements : 6175792 6179821 6181744 6182452 6182779 6183042 6183384 6184273 6184321 6184375 6184446 6184647 6184903 6185192 6185371 6185618 6185715 6185883 6186138 6186397</p>
          </article>
          <article class="node watch">
            <h3></h3>
            <span class="in">&gt;</span>
            <div class="list">List
              <ol><li><i>0</i>Family=</li><li><i>1</i>Family=</li><li><i>2</i>Family=</li><li><i>3</i>Family=</li><li><i>4</i>Family=</li><li><i>5</i>Family=</li><li><i>6</i>Family=</li></ol>
            </div>
          </article>

          <div class="modes">
            <button aria-label="3D 背景"><svg width="46" height="24" viewBox="0 0 46 24" fill="none" stroke="#777" stroke-width="1.500"><circle cx="8" cy="13" r="7"/><path d="M17 3l9 13H9zM30 7h11v14H30zM30 7l4-4h11v14l-4 4M41 7l4-4"/></svg></button>
            <button aria-label="グラフ"><svg width="48" height="24" viewBox="0 0 48 24" fill="#cfe8fb" stroke="#3aa0ea" stroke-width="1.500"><path d="M13 6l18 4M20 19h4l7-8" fill="none"/><path d="M1 2h12v9H1zM7 16h13v5H7zM31 5h16v12H31z"/><path d="M1 4h12M31 8h16" stroke-width="3"/></svg></button>
          </div>
          <div class="zooms">
            <button aria-label="全体表示"><svg width="16" height="16"><path d="M1 5V1h4M11 1h4v4M15 11v4h-4M5 15H1v-4" fill="none" stroke="#666" stroke-width="2"/></svg></button>
            <button aria-label="拡大"><svg width="14" height="14"><path d="M7 0v14M0 7h14" stroke="#777" stroke-width="2"/></svg></button>
            <button aria-label="縮小"><svg width="14" height="14"><path d="M0 7h14" stroke="#777" stroke-width="2"/></svg></button>
          </div>
          <button class="panbtn" aria-label="移動"><svg width="18" height="18" viewBox="0 0 18 18"><path d="M9 1v16M1 9h16M6 4l3-3 3 3M6 14l3 3 3-3M4 6L1 9l3 3M14 6l3 3-3 3" fill="none" stroke="#777" stroke-width="2"/></svg></button>
        </div>

        <footer class="run">
          <select aria-label="実行モード"><option>手動</option></select>
          <button>実行</button>
          <em>実行が終了しました。</em>
        </footer>
      </div>
    </section>

    <div class="brand">
      <svg class="frame" viewBox="0 0 366 74" width="366" height="74"><path d="M150 72H2V2H364V54" fill="none" stroke="#555" stroke-width="4"/></svg>
      <strong>BIM DEVELOPER</strong>
      <small>M&amp;F Integrated Office , Inc</small>
      <div class="logo"><b>M&amp;F</b> <span>TE<i>C</i>NI<i>C</i>A</span></div>
    </div>
    <svg class="arrow" width="13" height="20" viewBox="0 0 13 20"><path d="M1 1v15l4-4 3 7 2-1-3-6h5z" fill="#fff" stroke="#000"/></svg>
  </main>

  <!-- video controls -->
  <div class="player">
    <button class="play" aria-label="再生"><svg width="19" height="20"><path d="M0 0l19 10L0 20z" fill="#fff"/></svg></button>
    <div class="controls">
      <div class="seek"><input type="range" aria-label="再生位置" min="0" max="247" value="145"><output>02:25</output></div>
      <svg width="24" height="14"><path d="M1 14v-4M6 14V8M11 14V6M16 14V3M21 14V0" stroke="#00adef" stroke-width="3"/></svg>
      <button aria-label="設定"><svg width="16" height="16" viewBox="0 0 16 16"><circle cx="8" cy="8" r="4" fill="none" stroke="#fff" stroke-width="4"/><path d="M8 0v3M8 13v3M1 4l3 2M12 10l3 2M15 4l-3 2M4 10l-3 2" stroke="#fff" stroke-width="3"/></svg></button>
      <button aria-label="全画面を終了"><svg width="14" height="14" viewBox="0 0 14 14"><path d="M1 5h4V1M9 1v4h4M13 9H9v4M5 13V9H1M1 1l4 4M13 1L9 5M13 13L9 9M1 13l4-4" fill="none" stroke="#fff" stroke-width="2"/></svg></button>
    </div>
  </div>

  <script>
    // 背景グリッド（一点は画面中央、もう一点は右遠方の消失点）
    const grid = document.getElementById('grid');
    const vx = 1268, vy = 388, wx = 5475;
    let out = '';

    function line(x1, y1, x2, y2, major, dash) {
      const color = major ? '#a4a8b0' : '#bcd0e0';
      out += `<path d="M${x1} ${y1}L${x2} ${y2}" stroke="${color}" stroke-width="1" stroke-dasharray="${dash}"/>`;
    }

    for (let k = -30; k <= 58; k++) {
      // 破線の位相が揃わないように線ごとに間隔を変える
      line(vx + k * 26, 999, vx, vy, k % 5 === 0, k === 0 ? '60 2' : `${10 + (k & 3)} 6`);
    }
    for (let z = 33; z < 116; z++) {
      const y = vy + 25000 / z;
      const x2 = 1916;
      line(939, y, x2, y + (vy - y) * (x2 - 939) / (wx - 939), z % 5 === 0, z > 60 ? '16 6' : '11 8');
    }
    for (let z = 42; z < 113; z++) {
      const y = vy + 25000 / (z * 0.8);
      line(1268, y, 939, y + (y - vy) * 0.08, z % 5 === 0, '11 8');
    }
    grid.innerHTML = out;
  </script>
</body>
</html>
```

FILE: styles.css
```
* {
  box-sizing: border-box;
}
body {
  margin: 0;
  padding: 18px 0 22px;
  min-height: 100vh;
  display: flex;
  background: #000;
  color: #111;
  font: 15px/20px "Noto Sans", "Noto Sans CJK JP", sans-serif;
  font-feature-settings: "palt";
  overflow: hidden;
}
.defs {
  position: absolute;
}
button, input, select {
  font: inherit;
  color: inherit;
  font-feature-settings: inherit;
  border: 0;
  padding: 0;
  margin: 0;
  background: none;
  border-radius: 0;
}
select {
  appearance: none;
}
svg {
  flex: none;
  display: block;
}
a {
  color: inherit;
  text-decoration: none;
}
h1, h2, h3, p, ul, ol {
  margin: 0;
  padding: 0;
  font-size: inherit;
  font-weight: 400;
  list-style: none;
}
.desktop {
  position: relative;
  flex: 1;
  display: grid;
  grid-template-columns: 934fr 986fr;
  background: #fff;
  border-radius: 8px;
  overflow: hidden;
}

/* Revit */
.revit {
  display: flex;
  flex-direction: column;
  min-width: 0;
  margin-top: 8px;
  margin-bottom: 2px;
  border-top: 1px solid #4f86bd;
  border-right: 1px solid #6b90b8;
  background: #e2e2e6;
}
.title {
  display: flex;
  align-items: center;
  height: 37px;
  background: #fff;
  position: relative;
}
.app-btn {
  position: absolute;
  left: 0;
  top: 7px;
  width: 51px;
  height: 51px;
  display: flex;
  align-items: center;
  justify-content: center;
  gap: 4px;
  border: 1px solid #111;
  background: linear-gradient(#d4d4d4, #999);
  z-index: 1;
}
.title h1 {
  flex: 1;
  padding-left: 153px;
  font-size: 14px;
  font-feature-settings: normal;
  white-space: nowrap;
}
.win-btns {
  display: flex;
  gap: 44px;
  margin-right: 20px;
}
.tabs {
  display: flex;
  align-items: flex-end;
  height: 25px;
  padding-left: 57px;
  background: #9c9c9d;
}
.tabs a {
  height: 22px;
  padding: 0 12px;
}
.tabs a.kana {
  font-size: 13px;
}
.tabs a.active {
  background: #f1f1f1;
  border-radius: 3px 3px 0 0;
}
.tabs svg {
  margin: 0 0 9px 6px;
}
.tabs .fold {
  margin: 0 2px 6px 12px;
}
.ribbon {
  display: flex;
  height: 119px;
  background: linear-gradient(#e8e8e8, #a2a2a2);
  border-bottom: 1px solid #fff;
}
.panel {
  display: flex;
  flex-direction: column;
  width: 44px;
  border-right: 2px solid #c4c4c6;
  background: #fdfdfd;
}
.panel.first {
  width: 63px;
}
.panel.w52 {
  width: 54px;
}
.panel.w46 {
  width: 46px;
}
.panel footer {
  margin-top: auto;
  height: 22px;
  background: #ededee;
  display: flex;
  align-items: center;
  justify-content: center;
  gap: 8px;
}
.panel footer, .drop, .big {
  font-size: 14px;
  white-space: nowrap;
}
.modify {
  display: flex;
  flex-direction: column;
  align-items: center;
  gap: 4px;
  width: 47px;
  height: 90px;
  margin: 3px 0 0 8px;
  padding-top: 8px;
  border: 1px solid #1c62b0;
  background: linear-gradient(#b9d6f6, #9cc6f4);
}
.modify svg {
  margin-top: -3px;
}
.drop {
  display: flex;
  flex-direction: column;
  align-items: center;
  width: 76px;
  padding-top: 5px;
  border-right: 2px solid #c4c4c6;
  background: linear-gradient(#fbfbfb, #ececee);
}
.drop span, .big span {
  margin-top: 6px;
}
.drop:nth-of-type(n+2) span {
  font-size: 13px;
}
.big {
  display: flex;
  flex-direction: column;
  align-items: center;
  padding-top: 5px;
}
.big span, .big + footer {
  font-size: 12px;
}
.car {
  margin: auto 0 7px;
}
.icons {
  display: flex;
  flex-direction: column;
  align-items: center;
  gap: 9px;
  padding-top: 6px;
}
.icons.two {
  padding-top: 21px;
}
.options {
  height: 36px;
}
.work {
  flex: 1;
  display: flex;
  min-height: 0;
}
.docks {
  display: flex;
  flex-direction: column;
  width: 292px;
  flex: none;
}
.dock {
  border: 1px solid #e9e9ee;
  background: #f0f0f1;
  font-size: 14px;
}
.dock h2 {
  display: flex;
  align-items: center;
  justify-content: space-between;
  height: 27px;
  padding: 0 5px 0 4px;
  background: #bfcce0;
  color: #49535f;
  white-space: nowrap;
}
.dock h2 button {
  color: #111;
}
.browser h2 {
  font-size: 13px;
}
.props {
  height: 389px;
}
.dock-body {
  margin: 4px 1px 0 1px;
  border-top: 2px solid #222;
}
.type {
  display: flex;
  align-items: center;
  gap: 5px;
  height: 90px;
  padding: 4px 4px;
  border-bottom: 1px solid #222;
  background: linear-gradient(#fbfbfb, #eeeef0);
}
.type span {
  flex: 1;
}
.thumb {
  display: flex;
  align-items: center;
  justify-content: center;
  width: 82px;
  height: 82px;
  border: 1px solid #d4d4d6;
}
.instance {
  display: flex;
  height: 30px;
  padding-top: 1px;
}
.pick {
  display: flex;
  align-items: center;
  width: 179px;
  height: 27px;
  padding-right: 5px;
  border: 1px solid #b5b5b8;
  background: #e3e3e3;
}
.pick select {
  flex: 1;
  min-width: 0;
  margin-right: 8px;
  padding-left: 4px;
  overflow: hidden;
}
.instance button {
  display: flex;
  align-items: center;
  gap: 5px;
  padding-left: 6px;
  white-space: nowrap;
  font-size: 13px;
}
.scroller {
  display: flex;
  overflow: hidden;
}
.props .scroller {
  height: 208px;
}
.vbar, .hbar {
  display: flex;
  flex: none;
  align-items: center;
  background: #f0f0f1;
}
.vbar {
  flex-direction: column;
  width: 20px;
  padding: 6px 0;
}
.vbar i {
  width: 18px;
  background: #cbcbcb;
}
.vbar svg:last-child, .hbar svg:last-child {
  margin-top: auto;
}
.t1 {
  height: 38px;
  margin-top: 5px;
}
.t2 {
  height: 36px;
  margin-top: 48px;
}
.t3 {
  height: 20px;
  margin-top: 354px;
}
table {
  table-layout: fixed;
  border-collapse: collapse;
  background: #fff;
  align-self: flex-start;
  width: 268px;
}
.c1, .c2 {
  width: 126px;
}
th {
  height: 24px;
  padding: 0 8px 0 3px;
  background: #d9d9d9;
  font-weight: 400;
  text-align: left;
}
th svg {
  float: right;
  margin-top: 4px;
}
td {
  height: 24px;
  padding: 0 0 0 10px;
  border-bottom: 1px dotted #777;
  border-right: 1px dotted #777;
  font-size: 13px;
  white-space: nowrap;
}
td + td {
  padding: 0 1px 0 3px;
}
.off td {
  color: #777;
}
td input {
  display: block;
  width: 100%;
  height: 23px;
  padding-left: 5px;
  border: 1px solid #000;
}
td button {
  display: block;
  width: 100%;
  height: 21px;
  border: 1px solid #aaa;
  background: #e1e1e1;
}
.apply {
  display: flex;
  justify-content: space-between;
  padding: 1px 3px 0 2px;
}
.apply a {
  color: #2263c0;
  text-decoration: underline;
}
.apply button {
  width: 98px;
  height: 24px;
  background: #cacaca;
  border: 1px solid #bbb;
  color: #888;
}
.browser {
  flex: 1;
  display: flex;
  flex-direction: column;
  margin-top: 5px;
}
.browser .scroller {
  flex: 1;
  margin: 3px 1px 0 1px;
  border-top: 1px solid #777;
}
.tree {
  flex: 1;
  min-width: 0;
  padding: 0 0 0 10px;
  background: #fff;
  font-feature-settings: normal;
  overflow: hidden;
}
.tree li {
  display: flex;
  height: 22px;
  line-height: 22px;
  white-space: nowrap;
}
.tree i {
  position: relative;
  flex: none;
  width: 26px;
  border-left: 1px dotted #888;
  font-style: normal;
}
.tree i.none {
  border-color: transparent;
}
.tree .tee {
  width: 22px;
}
.tree .tee::after {
  content: "";
  display: block;
  width: 19px;
  height: 11px;
  border-bottom: 1px dotted #888;
}
.tree .end {
  border: 0;
}
.tree b {
  position: absolute;
  left: -7px;
  top: 5px;
  width: 13px;
  height: 13px;
  border: 1px solid #888;
  background: #f3f3f5;
  color: #2a3f8a;
  font: 14px/11px "Noto Sans", sans-serif;
  text-align: center;
}
.tree strong {
  margin-left: -3px;
  padding-left: 3px;
  background: #e2e0e2;
}
.hbar {
  height: 20px;
  padding: 0 6px;
}
.hbar i {
  width: 126px;
  height: 18px;
  margin-left: 7px;
  background: #cbcbcb;
}
.hbar svg:last-child {
  margin: 0 20px 0 auto;
}
.view {
  flex: 1;
  display: flex;
  flex-direction: column;
  min-width: 0;
  margin: 1px 0 2px 5px;
  border-left: 1px solid #777;
  border-top: 1px solid #777;
  background: #f0f0f1;
}
.view-main {
  flex: 1;
  display: flex;
}
.view-main .vbar {
  width: 21px;
}
.model {
  position: relative;
  flex: 1;
  background: #fff;
  overflow: hidden;
}
.beams {
  position: absolute;
  width: 100%;
  height: 100%;
}
.beams path {
  vector-effect: non-scaling-stroke;
}
.g {
  fill: #848980;
}
.d {
  fill: #2c2c29;
}
.dg {
  fill: #274d2f;
}
.db {
  fill: #2b3162;
}
.lg {
  fill: #77eb92;
}
.lb {
  fill: #8fa8ff;
}
.sel {
  fill: none;
  stroke: #3f5f9e;
  stroke-width: 2;
}
.ln {
  fill: none;
  stroke: #1010b4;
}
.dot {
  fill: none;
  stroke: #222;
  stroke-dasharray: 2 2;
}
.pt {
  fill: #0a0ac8;
}
.mdi {
  position: absolute;
  right: 3px;
  top: 8px;
}
.cube {
  position: absolute;
  right: 19px;
  top: 80px;
  font-size: 18px;
  fill: #666;
}
.navbar {
  position: absolute;
  right: 1px;
  top: 176px;
}
.spot {
  position: absolute;
  left: 26px;
  top: 253px;
  width: 94px;
  height: 94px;
  border-radius: 50%;
  background: rgba(200, 192, 30, .75);
}
.pan {
  position: absolute;
  left: 76px;
  top: 304px;
}
.viewbar {
  display: flex;
  align-items: center;
  height: 23px;
  padding-left: 31px;
  gap: 8px;
  font-family: "Liberation Sans", sans-serif;
}
.viewbar > span {
  width: 68px;
}
.viewbar .hbar {
  flex: 1;
  padding: 0;
}
.viewbar .hbar i {
  width: 21px;
  margin-left: 36px;
}
.viewbar .hbar svg:last-child {
  margin-right: 26px;
}
.status {
  display: flex;
  align-items: center;
  gap: 14px;
  height: 28px;
  padding: 0 40px 0 2px;
  border-top: 1px solid #aaa;
  background: linear-gradient(#e0e0e0, #cfcfcf);
  font-size: 13px;
  white-space: nowrap;
}
.status > span:first-child {
  width: 504px;
}
.status select {
  width: 255px;
  height: 22px;
  background: #fff;
}
.opt {
  margin-left: auto;
}

/* Dynamo */
.dynamo {
  display: flex;
  flex-direction: column;
  min-width: 0;
  padding-bottom: 3px;
  color: #c9c9c9;
}
.dyn-title {
  display: flex;
  align-items: center;
  gap: 8px;
  height: 42px;
  padding: 3px 6px 0 10px;
  color: #777;
}
.dyn-title h1 {
  flex: 1;
}
.dyn-title .win-btns {
  margin-right: 21px;
}
.dyn-body {
  flex: 1;
  display: flex;
  flex-direction: column;
  min-height: 0;
  background: #353436;
  border-right: 4px solid #3d6ca8;
}
.menu {
  display: flex;
  align-items: center;
  height: 31px;
  padding-left: 20px;
  gap: 37px;
  border-bottom: 1px solid #444;
  font-size: 14px;
}
.alert, .count {
  width: 19px;
  height: 19px;
  border-radius: 50%;
  line-height: 19px;
  text-align: center;
  font-weight: 700;
  background: #ddd;
  color: #333;
}
.count {
  margin-left: -37px;
  background: #8fe69a;
  color: #5fb070;
  font-weight: 400;
}
.tools {
  display: flex;
  align-items: center;
  gap: 30px;
  height: 41px;
  padding: 0 22px 0 20px;
}
.cloud {
  margin-left: auto;
}
.tools .cloud + svg {
  margin-left: -13px;
}
.files {
  display: flex;
  align-items: center;
  justify-content: space-between;
  height: 25px;
  padding-right: 4px;
  background: #232323;
}
.file {
  display: flex;
  align-items: center;
  gap: 6px;
  height: 25px;
  padding: 0 5px 0 16px;
  background: #353436;
  font-weight: 600;
}
.file button {
  color: #777;
}
.canvas {
  position: relative;
  flex: 1;
  margin-left: 5px;
  background: #f9f9f9;
  overflow: hidden;
}
.scene {
  position: absolute;
  width: 100%;
  height: 100%;
}
.library {
  position: absolute;
  left: 0;
  top: 25px;
  width: 27px;
  height: 100px;
  display: flex;
  flex-direction: column;
  align-items: center;
  gap: 8px;
  padding-top: 11px;
  background: #353436;
  color: #bbb;
  font-size: 13px;
}
.library span {
  writing-mode: sideways-lr;
}
.group-name {
  position: absolute;
  left: 745px;
  top: 246px;
  color: #000;
  font-size: 72px;
  font-weight: 300;
  line-height: 90px;
  white-space: nowrap;
}
.node {
  position: absolute;
  border: 2px solid #5e5a59;
  background: #cfc6c2;
  color: #111;
  font: 25px/34px "Open Sans", "Noto Sans CJK JP", sans-serif;
}
.node h3 {
  height: 55px;
  background: #5e5a59;
  color: #fff;
  font-size: 27px;
  font-weight: 600;
  line-height: 53px;
  text-align: center;
}
.multi {
  left: 113px;
  top: 255px;
  width: 495px;
  height: 420px;
}
.multi p {
  width: 370px;
  padding: 9px 0 0 9px;
}
.ports {
  display: flex;
  height: 53px;
}
.ports button {
  flex: 1;
  border: 1px solid #777;
  background: #dedede;
}
.ports span {
  width: 140px;
  background: #e8e3e1;
  color: #5e5a59;
  font-size: 27px;
  line-height: 53px;
  text-align: center;
}
.single {
  left: 153px;
  top: 600px;
  width: 364px;
  height: 164px;
  padding: 64px 0 0 9px;
}
.watch {
  left: 754px;
  top: 371px;
  width: 420px;
  height: 700px;
}
.in {
  display: block;
  width: 38px;
  height: 51px;
  background: #e8e3e1;
  color: #5e5a59;
  line-height: 51px;
  text-align: center;
}
.list {
  margin: 13px 0 0 10px;
  padding: 12px 0 0 32px;
  height: 560px;
  background: #e8e3e1;
  color: #555;
  font: 22px/30px "DejaVu Sans Mono", monospace;
}
.list ol {
  border-left: 2px solid #999;
  height: 500px;
}
.list li {
  display: flex;
  align-items: center;
  gap: 9px;
  height: 43px;
  padding-left: 32px;
}
.list i {
  width: 41px;
  height: 23px;
  background: #b9b3b1;
  line-height: 23px;
  text-align: center;
}
.modes, .zooms, .panbtn {
  position: absolute;
  right: 10px;
  display: flex;
  background: #fff;
  border-radius: 2px;
  box-shadow: 0 0 3px #aaa;
}
.modes {
  top: 15px;
  height: 30px;
}
.modes button {
  display: flex;
  align-items: center;
  justify-content: center;
  width: 65px;
  border-left: 1px solid #ddd;
}
.zooms {
  top: 60px;
  width: 29px;
  height: 89px;
  flex-direction: column;
  justify-content: space-around;
  align-items: center;
  background: rgba(255, 255, 255, .85);
}
.panbtn {
  top: 159px;
  width: 29px;
  height: 29px;
  align-items: center;
  justify-content: center;
  background: rgba(255, 255, 255, .85);
}
.run {
  display: flex;
  align-items: stretch;
  gap: 4px;
  height: 56px;
  padding: 7px 0 0 6px;
  border-top: 2px solid #8a8a8a;
  background: linear-gradient(#232323, #151515);
}
.run select {
  width: 149px;
  padding: 0 0 2px 10px;
  border: 1px solid #444;
  background-color: #2b2b2b;
  background-image: linear-gradient(to bottom left, #aaa 50%, transparent 50%), linear-gradient(to bottom right, #aaa 50%, transparent 50%);
  background-position: 127px 20px, 132px 20px;
  background-size: 5px 6px;
  background-repeat: no-repeat;
  font-size: 17px;
}
.run button {
  width: 124px;
  padding-bottom: 2px;
  background: #353436;
  border: 1px solid #3d3d3f;
  font-size: 17px;
}
.run em {
  padding: 13px 0 0 126px;
  color: #8c8c8c;
  font-size: 14px;
}

/* watermark */
.brand {
  position: absolute;
  right: 22px;
  bottom: 14px;
  width: 366px;
  height: 140px;
  color: #333;
}
.frame {
  position: absolute;
  opacity: .75;
}
.brand strong {
  position: absolute;
  left: 33px;
  top: 10px;
  font: 39px/54px "Noto Sans", sans-serif;
  white-space: nowrap;
  opacity: .65;
}
.brand small {
  position: absolute;
  left: 156px;
  top: 59px;
  font-size: 16px;
  opacity: .75;
  white-space: nowrap;
}
.logo {
  position: absolute;
  left: 18px;
  bottom: 0;
  display: flex;
  align-items: baseline;
  gap: 6px;
  width: 319px;
  height: 59px;
  padding-left: 1px;
  background: rgba(200, 200, 200, .5);
  color: #111;
  font: 58px/60px "Noto Sans", sans-serif;
}
.logo b {
  font-weight: 500;
}
.logo span {
  font-size: 43px;
  font-weight: 600;
}
.logo i {
  color: #8c101c;
  font-style: normal;
}
.arrow {
  position: absolute;
  left: 589px;
  bottom: 40px;
}

/* player */
.player {
  position: absolute;
  left: 448px;
  right: 448px;
  bottom: 10px;
  display: flex;
  align-items: flex-end;
  gap: 9px;
}
.play, .controls {
  display: flex;
  align-items: center;
  background: rgba(29, 41, 39, .77);
}
.play {
  justify-content: center;
  width: 65px;
  height: 40px;
  padding-left: 3px;
  border-radius: 4px;
}
.controls {
  flex: 1;
  gap: 11px;
  height: 32px;
  padding: 0 9px 0 11px;
}
.seek {
  position: relative;
  flex: 1;
  display: flex;
}
.seek input {
  appearance: none;
  width: 100%;
  height: 12px;
  border: 1px solid #777;
  background: linear-gradient(90deg, #00adef 58.5%, #666 58.5%, #666 95%, transparent 95%);
}
.seek input::-webkit-slider-thumb {
  appearance: none;
  width: 1px;
  height: 10px;
}
.seek output {
  position: absolute;
  left: 58.5%;
  bottom: 14px;
  transform: translateX(-50%);
  padding: 0 3px;
  background: #fff;
  color: #222;
  font: 12px/16px "DejaVu Sans", sans-serif;
}
.seek output::after {
  content: "";
  position: absolute;
  left: 50%;
  top: 100%;
  margin-left: -3px;
  border: 3px solid transparent;
  border-top-color: #fff;
}
```
